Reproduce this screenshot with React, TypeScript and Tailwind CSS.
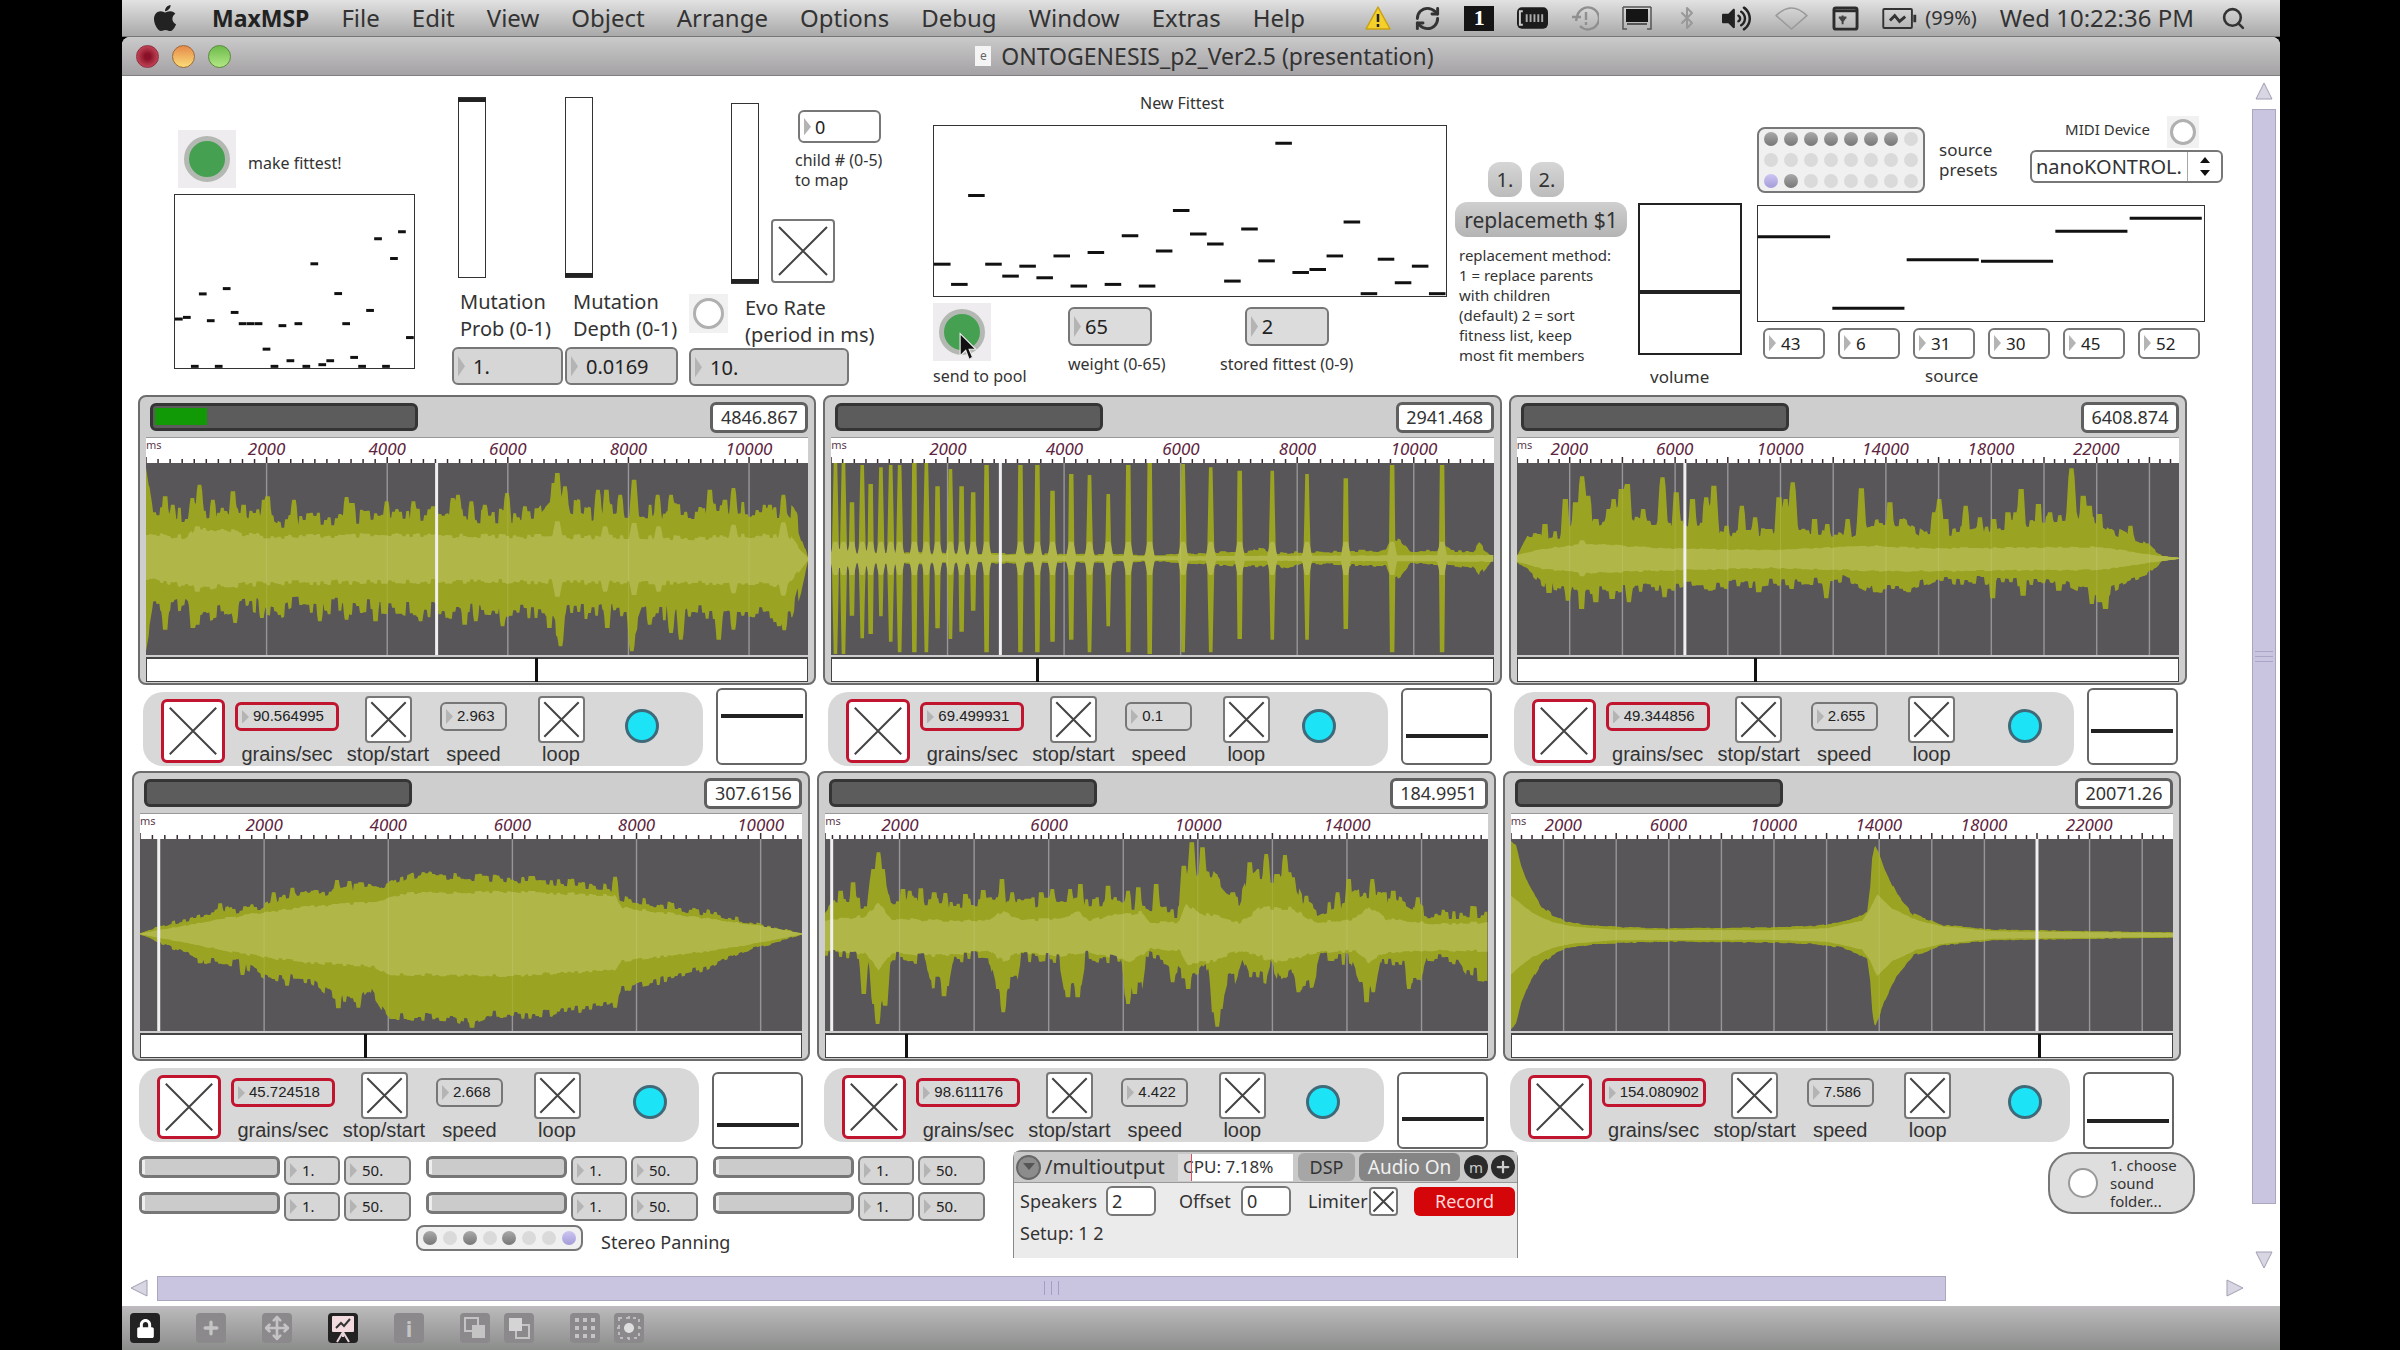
import React from 'react'
import { FaApple, FaLock, FaVolumeUp } from 'react-icons/fa'
import { Bluetooth, Move, Plus, RefreshCw, Search } from 'lucide-react'

type Pt = [number, number]

type Wave = {
    width: number
    mid: number
    jitter: number
    slope: number
    top: Pt[]
    bottom: Pt[]
    innerTop: Pt[]
    innerBottom: Pt[]
    topSpikes: Pt[]
    bottomSpikes: Pt[]
    innerSpikes: Pt[]
}

type PlayerData = {
    id: string
    time: string
    level: number
    step: number
    every: number
    ticks: number
    labels: string[]
    head: number
    range: number
    grains: string
    speed: string
    gain: number
    led: string
    wave: Wave
}

const lerp = (pts: Pt[], x: number) => {
    if (x <= pts[0][0]) return pts[0][1]
    for (let i = 1; i < pts.length; i++) {
        const [x1, y1] = pts[i]
        const [x0, y0] = pts[i - 1]
        if (x <= x1) return y0 + ((y1 - y0) * (x - x0)) / (x1 - x0 || 1)
    }
    return pts[pts.length - 1][1]
}

const noise = (n: number) => {
    const v = Math.sin(n * 12.9898) * 43758.5453
    return (v - Math.floor(v)) * 2 - 1
}

// builds a closed outline from the two envelopes, adding grit and peaks
const outline = (w: Wave, top: Pt[], bottom: Pt[], up: Pt[], down: Pt[], jitter: number, slope: number) => {
    const upper: string[] = []
    const lower: string[] = []
    for (let x = 0; x <= w.width; x += 2) {
        const t0 = lerp(top, x)
        const b0 = lerp(bottom, x)
        const room = Math.min(1, (b0 - t0) / 150)
        const cell = Math.floor(x / 8)
        let t = t0 + noise(cell + 3) * jitter * room
        let b = b0 + noise(cell + 71) * jitter * room
        up.forEach(([sx, sy]) => {
            t = Math.min(t, sy + Math.max(0, Math.abs(x - sx) - 5) * slope)
        })
        down.forEach(([sx, sy]) => {
            b = Math.max(b, sy - Math.max(0, Math.abs(x - sx) - 5) * slope)
        })
        upper.push(`${x},${Math.round(t)}`)
        lower.unshift(`${x},${Math.round(b)}`)
    }
    return [...upper, ...lower].join(' ')
}

const shift = (pts: Pt[], dx: number, dy: number): Pt[] => pts.map(([x, y]) => [x - dx, y - dy])

const clicks: [number, number, number][] = [
    [60, 222, 795], [78, 222, 795], [97, 340, 680], [120, 228, 748], [139, 285, 735], [162, 235, 682],
    [184, 228, 758], [204, 228, 790], [237, 222, 790], [264, 222, 790], [289, 292, 718], [318, 240, 750],
    [343, 292, 728], [369, 310, 665], [399, 228, 790], [475, 228, 790], [513, 228, 790], [547, 305, 758],
    [589, 255, 752], [630, 258, 790], [672, 315, 712], [717, 228, 790], [765, 222, 795], [840, 225, 790],
    [902, 235, 790], [967, 245, 750], [1040, 245, 752], [1118, 255, 752], [1205, 268, 720],
    [1309, 228, 790], [1421, 228, 790],
]

const bellTop: Pt[] = [
    [0, 5], [10, 20], [20, 80], [35, 140], [60, 200], [80, 225], [110, 248], [150, 258], [180, 262], [300, 268],
    [500, 266], [600, 261], [650, 250], [680, 235], [700, 215], [706, 150], [710, 60], [715, 18], [722, 35],
    [735, 90], [760, 170], [790, 225], [850, 258], [950, 272], [1302, 280],
]
const bellInner: Pt[] = [
    [0, 170], [40, 220], [80, 248], [120, 262], [200, 272], [500, 274], [620, 268], [690, 245], [706, 210],
    [720, 165], [750, 210], [800, 245], [850, 262], [950, 277], [1302, 282],
]
const mirror = (pts: Pt[], sum: number): Pt[] => pts.map(([x, y]) => [x, sum - y])

const waves: Wave[] = [
    {
        width: 1486, mid: 288, jitter: 26, slope: 18,
        top: [[0, 10], [16, 150], [280, 155], [300, 172], [700, 158], [880, 160], [905, 120], [940, 120], [1000, 150], [1440, 140], [1460, 170], [1486, 285]],
        bottom: [[0, 565], [16, 440], [90, 430], [110, 460], [240, 425], [300, 445], [330, 425], [700, 445], [900, 440], [920, 500], [945, 445], [1080, 440], [1095, 500], [1110, 445], [1450, 455], [1486, 290]],
        innerTop: [[0, 215], [90, 220], [110, 195], [280, 220], [700, 218], [1240, 225], [1440, 215], [1486, 286]],
        innerBottom: [[0, 350], [110, 375], [280, 360], [700, 355], [1240, 360], [1440, 365], [1486, 290]],
        topSpikes: [[43, 100], [60, 125], [104, 105], [120, 65], [150, 110], [195, 85], [219, 125], [265, 110], [273, 100], [332, 110], [450, 102], [463, 120], [540, 115], [600, 115], [645, 130], [688, 105], [700, 95], [730, 115], [760, 125], [810, 90], [850, 130], [915, 60], [923, 30], [940, 70], [1014, 80], [1033, 80], [1064, 95], [1095, 50], [1148, 95], [1178, 95], [1265, 80], [1299, 110], [1318, 75], [1400, 125], [1430, 95]],
        bottomSpikes: [[43, 500], [105, 495], [115, 485], [200, 480], [260, 465], [390, 475], [450, 470], [515, 475], [616, 475], [715, 485], [740, 475], [800, 490], [905, 495], [930, 550], [1035, 495], [1090, 565], [1130, 485], [1178, 510], [1200, 530], [1285, 530], [1318, 500], [1420, 490], [1432, 502]],
        innerSpikes: [[115, 190], [923, 175], [1030, 190], [1095, 180], [1150, 190], [1318, 185], [1430, 178]],
    },
    {
        width: 1486, mid: 286, jitter: 14, slope: 130,
        top: [[0, 268], [740, 276], [940, 265], [950, 255], [1000, 270], [1245, 262], [1258, 225], [1280, 240], [1300, 266], [1360, 262], [1370, 235], [1390, 262], [1440, 265], [1455, 245], [1486, 284]],
        bottom: [[0, 304], [740, 296], [960, 312], [1000, 305], [1020, 318], [1060, 300], [1245, 310], [1258, 350], [1280, 335], [1300, 300], [1440, 312], [1455, 335], [1486, 288]],
        innerTop: [[0, 272], [740, 280], [1486, 276]],
        innerBottom: [[0, 300], [740, 292], [1486, 296]],
        topSpikes: clicks.map(([x, t]): Pt => [x - 50, t - 222]),
        bottomSpikes: clicks.map(([x, , b]): Pt => [x - 50, b - 222]),
        innerSpikes: clicks.map(([x]): Pt => [x - 50, 236]),
    },
    {
        width: 1302, mid: 286, jitter: 14, slope: 26,
        top: [[0, 278], [20, 220], [90, 212], [100, 180], [130, 160], [150, 195], [220, 165], [350, 185], [420, 210], [600, 210], [660, 225], [690, 180], [760, 178], [800, 215], [1000, 180], [1100, 160], [1150, 180], [1180, 210], [1230, 232], [1270, 280], [1302, 284]],
        bottom: [[0, 298], [50, 365], [100, 385], [220, 375], [600, 355], [640, 348], [700, 378], [770, 378], [820, 350], [1080, 360], [1150, 395], [1200, 355], [1240, 335], [1270, 292], [1302, 288]],
        innerTop: [[0, 276], [50, 258], [130, 242], [300, 256], [500, 262], [700, 248], [800, 256], [1150, 252], [1250, 276], [1302, 284]],
        innerBottom: [[0, 296], [50, 318], [130, 330], [300, 322], [500, 315], [740, 325], [1150, 320], [1250, 298], [1302, 288]],
        topSpikes: shift([[105, 405], [145, 330], [165, 340], [178, 262], [190, 320], [205, 390], [230, 360], [240, 330], [255, 300], [267, 285], [298, 360], [336, 265], [363, 310], [395, 330], [422, 325], [437, 290], [462, 410], [492, 350], [518, 385], [565, 325], [578, 330], [592, 280], [635, 390], [660, 405], [700, 390], [727, 298], [783, 340], [870, 370], [880, 330], [893, 390], [932, 350], [960, 385], [987, 390], [1015, 370], [1030, 370], [1041, 300], [1075, 345], [1098, 370], [1140, 238], [1163, 320], [1175, 350], [1195, 375], [1256, 410]], 50, 222),
        bottomSpikes: shift([[113, 612], [150, 635], [177, 660], [205, 640], [237, 630], [270, 640], [340, 625], [430, 605], [525, 610], [590, 600], [658, 628], [755, 610], [820, 610], [985, 628], [1045, 620], [1115, 605], [1180, 645], [1195, 640], [1207, 660]], 50, 222),
        innerSpikes: [[128, 232]],
    },
    {
        width: 1486, mid: 284, jitter: 13, slope: 16,
        top: [[0, 283], [60, 255], [150, 225], [270, 200], [300, 178], [450, 155], [510, 140], [540, 150], [600, 115], [650, 108], [800, 118], [950, 128], [1020, 142], [1060, 150], [1078, 178], [1130, 188], [1250, 215], [1350, 245], [1440, 270], [1486, 283]],
        bottom: shift([[45, 518], [100, 550], [180, 595], [270, 605], [330, 645], [430, 655], [480, 705], [540, 715], [560, 680], [600, 765], [740, 768], [790, 785], [830, 760], [950, 758], [1110, 725], [1125, 680], [1200, 660], [1300, 625], [1400, 570], [1531, 518]], 45, 232),
        innerTop: [[0, 283], [270, 220], [400, 200], [530, 190], [600, 163], [850, 158], [1065, 170], [1082, 205], [1200, 225], [1400, 262], [1486, 283]],
        innerBottom: shift([[45, 518], [270, 575], [400, 600], [570, 615], [600, 638], [870, 643], [1110, 625], [1125, 598], [1300, 572], [1400, 552], [1531, 518]], 45, 232),
        topSpikes: shift([[225, 425], [345, 392], [387, 378], [440, 385], [487, 355], [515, 358], [540, 362], [685, 335], [815, 342], [1111, 345]], 45, 232),
        bottomSpikes: shift([[180, 605], [275, 640], [375, 672], [490, 740], [535, 738], [790, 798], [1111, 738]], 45, 232),
        innerSpikes: [],
    },
    {
        width: 1486, mid: 288, jitter: 20, slope: 20,
        top: shift([[30, 460], [50, 425], [125, 430], [130, 370], [150, 310], [168, 370], [178, 430], [420, 430], [610, 435], [690, 430], [750, 440], [790, 460], [828, 460], [834, 345], [900, 350], [930, 405], [960, 420], [975, 370], [1000, 350], [1080, 360], [1100, 420], [1135, 460], [1200, 425], [1240, 400], [1280, 410], [1330, 430], [1380, 465], [1516, 460]], 30, 240),
        bottom: shift([[30, 590], [105, 590], [130, 620], [140, 730], [165, 730], [176, 590], [255, 600], [265, 672], [310, 665], [320, 590], [400, 600], [412, 670], [460, 670], [470, 590], [555, 600], [566, 680], [605, 670], [615, 590], [695, 600], [702, 690], [742, 675], [750, 590], [800, 610], [830, 650], [870, 640], [890, 610], [900, 710], [925, 700], [932, 665], [950, 660], [965, 600], [980, 650], [1020, 655], [1030, 610], [1050, 665], [1080, 640], [1090, 680], [1125, 670], [1140, 590], [1210, 600], [1230, 670], [1270, 665], [1280, 600], [1330, 610], [1340, 670], [1365, 665], [1380, 600], [1450, 600], [1470, 640], [1516, 652]], 30, 240),
        innerTop: shift([[30, 485], [120, 470], [150, 430], [180, 482], [400, 485], [430, 455], [470, 485], [560, 480], [600, 460], [620, 485], [700, 465], [740, 460], [760, 490], [825, 490], [840, 435], [870, 460], [900, 470], [960, 490], [1010, 445], [1080, 450], [1130, 490], [1220, 480], [1250, 440], [1290, 480], [1400, 495], [1516, 490]], 30, 240),
        innerBottom: shift([[30, 575], [120, 585], [150, 635], [180, 580], [280, 590], [400, 575], [430, 605], [470, 580], [560, 590], [620, 578], [720, 605], [760, 570], [825, 575], [845, 615], [900, 605], [960, 575], [1050, 610], [1130, 580], [1220, 575], [1250, 610], [1290, 580], [1400, 575], [1516, 575]], 30, 240),
        topSpikes: shift([[65, 395], [93, 370], [138, 330], [150, 280], [160, 330], [205, 390], [220, 395], [245, 388], [275, 400], [300, 402], [345, 405], [385, 393], [427, 360], [450, 400], [515, 400], [540, 390], [580, 390], [603, 375], [635, 420], [665, 380], [710, 395], [733, 385], [773, 375], [835, 320], [853, 250], [877, 265], [905, 345], [945, 400], [983, 310], [1020, 285], [1045, 345], [1062, 288], [1080, 355], [1110, 410], [1180, 400], [1205, 360], [1258, 360], [1285, 400], [1305, 395], [1360, 415], [1485, 442]], 30, 240),
        bottomSpikes: shift([[117, 705], [140, 735], [148, 795], [165, 740], [297, 712], [430, 760], [575, 715], [597, 715], [710, 735], [725, 705], [810, 670], [845, 690], [903, 760], [910, 803], [918, 750], [1092, 700], [1245, 730], [1260, 700], [1340, 690]], 30, 240),
        innerSpikes: [],
    },
    {
        width: 1302, mid: 287, jitter: 5, slope: 30,
        top: bellTop, bottom: mirror(bellTop, 576),
        innerTop: bellInner, innerBottom: mirror(bellInner, 576),
        topSpikes: [], bottomSpikes: [], innerSpikes: [],
    },
]

const evens = ['2000', '4000', '6000', '8000', '10000']
const fours = ['2000', '6000', '10000', '14000', '18000', '22000']

const players: PlayerData[] = [
    { id: 'p1', time: '4846.867', level: 20, step: 270.6, every: 1, ticks: 10, labels: evens, head: 652, range: 59, grains: '90.564995', speed: '2.963', gain: 66, led: 'ml-10', wave: waves[0] },
    { id: 'p2', time: '2941.468', level: 0, step: 261.5, every: 1, ticks: 10, labels: evens, head: 380, range: 31, grains: '69.499931', speed: '0.1', gain: 35, led: 'ml-8', wave: waves[1] },
    { id: 'p3', time: '6408.874', level: 0, step: 103.6, every: 2, ticks: 5, labels: fours, head: 330, range: 36, grains: '49.344856', speed: '2.655', gain: 43, led: 'ml-13', wave: waves[2] },
    { id: 'p4', time: '307.6156', level: 0, step: 278.5, every: 1, ticks: 10, labels: evens, head: 42, range: 34, grains: '45.724518', speed: '2.668', gain: 27, led: 'ml-13', wave: waves[3] },
    { id: 'p5', time: '184.9951', level: 0, step: 167.3, every: 2, ticks: 10, labels: fours.slice(0, 4), head: 15, range: 12, grains: '98.611176', speed: '4.422', gain: 37, led: 'ml-10', wave: waves[4] },
    { id: 'p6', time: '20071.26', level: 0, step: 103.4, every: 2, ticks: 5, labels: fours, head: 1034, range: 80, grains: '154.080902', speed: '7.586', gain: 33, led: 'ml-14', wave: waves[5] },
]

const pool = [957, 952, 1100, 881, 962, 1100, 865, 937, 971, 971, 971, 1048, 1100, 977, 1083, 971, 1100, 790, 1095, 1083, 880, 971, 1073, 1100, 931, 714, 1100, 774, 693, 1013].map((y) => (y - 582) / 523)
const fittest = [614, 675, 407, 614, 650, 620, 655, 589, 680, 579, 675, 528, 680, 574, 452, 523, 553, 665, 508, 604, 249, 639, 630, 589, 487, 703, 599, 670, 620, 703].map((y) => (y - 197) / 513)
const sources = [709, 926, 779, 784, 693, 653].map((y) => (y - 616) / 349)

const MultiSlider = ({ values, className, label }: { values: number[]; className: string; label: string }) => (
    <svg role="img" aria-label={label} viewBox={`0 0 ${values.length} 1`} preserveAspectRatio="none" className={`block border border-[#333] bg-white ${className}`}>
        {values.map((v, i) => (
            <line key={i} x1={i} x2={i + 0.97} y1={v} y2={v} stroke="#111" strokeWidth={3} vectorEffect="non-scaling-stroke" />
        ))}
    </svg>
)

const NumBox = ({ id, value, label, className, inputClass = '' }: { id: string; value: string; label?: string; className: string; inputClass?: string }) => (
    <div className={`flex items-center border-2 border-[#777] text-[#222] ${className}`}>
        <svg viewBox="0 0 8 16" preserveAspectRatio="none" className="h-3/5 w-[7px] shrink-0 ml-1">
            <path d="M0 0 L8 8 L0 16 Z" fill="#b4b4b4" />
        </svg>
        <input id={id} aria-label={label} defaultValue={value} className={`w-full min-w-0 bg-transparent outline-none ${inputClass}`} />
    </div>
)

const Toggle = ({ id, label, className }: { id: string; label?: string; className: string }) => (
    <span className={`relative block shrink-0 border-2 bg-white ${className}`}>
        <input id={id} aria-label={label} type="checkbox" defaultChecked className="block size-full appearance-none" />
        <svg viewBox="0 0 40 40" className="absolute inset-0 size-full pointer-events-none" stroke="#444">
            <path d="M4 4 L36 36 M36 4 L4 36" strokeWidth={2} vectorEffect="non-scaling-stroke" />
        </svg>
    </span>
)

const VSlider = ({ label, value, className }: { label: string; value: number; className: string }) => (
    <input
        type="range"
        aria-label={label}
        defaultValue={value}
        className={`block appearance-none bg-white [writing-mode:vertical-lr] [direction:rtl] [&::-webkit-slider-thumb]:appearance-none [&::-webkit-slider-thumb]:h-[4px] [&::-webkit-slider-thumb]:bg-[#222] ${className}`}
    />
)

const GreenButton = ({ id, children }: { id: string; children?: React.ReactNode }) => (
    <button id={id} aria-label={id} className="relative grid size-[58px] shrink-0 place-items-center bg-[#eeecee]">
        <span className="size-[46px] rounded-full border-[5px] border-[#b3b8b3] bg-[#46a052]" />
        {children}
    </button>
)

const Bang = ({ label, className }: { label: string; className: string }) => (
    <button aria-label={label} className={`grid shrink-0 place-items-center bg-[#f1f1f1] ${className}`}>
        <span className="size-4/5 rounded-full border-[3px] border-[#b0b0b0] bg-white" />
    </button>
)

const dotTone: Record<string, string> = {
    o: 'bg-linear-to-b from-[#aaa] to-[#777]',
    '.': 'bg-[#dadada]',
    x: 'bg-linear-to-b from-[#cdc6f2] to-[#a39cd8]',
}

const Presets = ({ dots, label, className }: { dots: string; label: string; className: string }) => (
    <div className={`grid shrink-0 grid-cols-8 place-items-center rounded-lg border-2 border-[#777] bg-[#f0f0f0] px-[2px] ${className}`}>
        {dots.split('').map((d, i) => (
            <button key={i} aria-label={`${label} ${i + 1}`} className={`size-[14px] rounded-full ${dotTone[d]}`} />
        ))}
    </div>
)

const Waveform = ({ p }: { p: PlayerData }) => {
    const { wave } = p
    const lines: number[] = []
    for (let x = p.step; x < wave.width; x += p.step) lines.push(x)
    return (
        <svg role="img" aria-label="waveform" viewBox={`0 0 ${wave.width} 576`} preserveAspectRatio="none" className="block h-[192px] w-full bg-[#585658]">
            {lines.map((x) => (
                <line key={x} x1={x} x2={x} y1={0} y2={576} stroke="#8b898b" strokeWidth={1.5} vectorEffect="non-scaling-stroke" />
            ))}
            <polygon points={outline(wave, wave.top, wave.bottom, wave.topSpikes, wave.bottomSpikes, wave.jitter, wave.slope)} fill="#9ba422" />
            <polygon
                points={outline(wave, wave.innerTop, wave.innerBottom, wave.innerSpikes, wave.innerSpikes.map(([x, y]): Pt => [x, wave.mid * 2 - y]), wave.jitter / 3, 7)}
                fill="#b0b748"
            />
            {lines.map((x) => (
                <line key={x} x1={x} x2={x} y1={0} y2={576} stroke="#ffffff" strokeOpacity={0.12} vectorEffect="non-scaling-stroke" />
            ))}
            <line x1={p.head} x2={p.head} y1={0} y2={576} stroke="#f0f0f0" strokeWidth={3} vectorEffect="non-scaling-stroke" />
        </svg>
    )
}

const Ruler = ({ p }: { p: PlayerData }) => {
    const pct = (n: number) => `${(n / p.wave.width) * 100}%`
    const ticks: number[] = []
    for (let i = 0; (i * p.step) / p.ticks < p.wave.width; i++) ticks.push(i)
    return (
        <div className="relative h-[26px] overflow-hidden border-t border-[#999] bg-white">
            <span className="absolute left-0 top-0 text-[11px] leading-[14px] text-[#5b3a4c]">ms</span>
            <div className="flex text-center text-[17px] leading-[22px] italic text-[#5e2540]">
                <span className="shrink-0" style={{ width: pct(p.step * (1 - p.every / 2)) }} />
                {p.labels.map((l) => (
                    <span key={l} className="shrink-0" style={{ width: pct(p.step * p.every) }}>{l}</span>
                ))}
            </div>
            <svg viewBox={`0 0 ${p.wave.width} 6`} preserveAspectRatio="none" className="absolute bottom-0 left-0 h-[6px] w-full">
                {ticks.map((i) => (
                    <line key={i} x1={(i * p.step) / p.ticks} x2={(i * p.step) / p.ticks} y1={i % p.ticks ? 2 : 0} y2={6} stroke="#3a2a34" strokeWidth={1.5} vectorEffect="non-scaling-stroke" />
                ))}
            </svg>
        </div>
    )
}

const Control = ({ id, text, className, children }: { id: string; text: string; className: string; children: React.ReactNode }) => (
    <div className={`flex shrink-0 flex-col items-center ${className}`}>
        <div className="flex h-[47px]">{children}</div>
        <label htmlFor={id} className="text-[20px] leading-[22px] whitespace-nowrap text-[#333]">{text}</label>
    </div>
)

const Player = ({ p, strip, gain }: { p: PlayerData; strip: string; gain: string }) => (
    <section className="min-w-0 flex-1">
        <div className="rounded-lg border-2 border-[#6c6c6c] bg-[#cecece] px-[6px] pb-px">
            <div className="flex h-[40px] items-center justify-between pl-1">
                <div className="h-[28px] w-[268px] rounded-md border-[3px] border-[#353535] bg-[#5c5c5c] p-[2px]">
                    {p.level > 0 && <div className="h-[17px] bg-[#119a06]" style={{ width: `${p.level}%` }} />}
                </div>
                <input aria-label="position" defaultValue={p.time} className="h-[31px] w-[98px] rounded-md border-[3px] border-[#606060] bg-white text-center text-[18px] text-[#333]" />
            </div>
            <Ruler p={p} />
            <Waveform p={p} />
            <input
                type="range"
                aria-label="loop point"
                defaultValue={p.range}
                className="mt-[2px] block h-[25px] w-full appearance-none border border-t-2 border-[#444] bg-white [&::-webkit-slider-thumb]:appearance-none [&::-webkit-slider-thumb]:h-[24px] [&::-webkit-slider-thumb]:w-[3px] [&::-webkit-slider-thumb]:bg-[#111]"
            />
        </div>
        <div className={`flex items-start gap-[13px] ${strip}`}>
            <div className="mt-[7px] flex h-[74px] w-[560px] shrink-0 rounded-[20px] bg-[#d8d8d8] pl-[18px] pt-1 font-['Liberation_Sans',sans-serif]">
                <Toggle id={`${p.id}-on`} label="player on" className="mt-[3px] size-[64px] rounded-md border-[3px] border-[#c0142f]" />
                <Control id={`${p.id}-grains`} text="grains/sec" className="ml-[10px] w-[104px]">
                    <NumBox id={`${p.id}-grains`} value={p.grains} className="mt-[6px] h-[29px] w-[104px] rounded-md border-[3px] border-[#c0142f]" inputClass="pl-[4px] text-[15px]" />
                </Control>
                <Control id={`${p.id}-run`} text="stop/start" className="ml-1 w-[90px]">
                    <Toggle id={`${p.id}-run`} className="size-[47px] rounded border-[#777]" />
                </Control>
                <Control id={`${p.id}-speed`} text="speed" className="ml-[7px] w-[67px]">
                    <NumBox id={`${p.id}-speed`} value={p.speed} className="mt-[6px] h-[29px] w-[67px] rounded-md" inputClass="pl-[4px] text-[15px]" />
                </Control>
                <Control id={`${p.id}-loop`} text="loop" className="ml-[30px] w-[48px]">
                    <Toggle id={`${p.id}-loop`} className="size-[47px] rounded border-[#777]" />
                </Control>
                <button aria-label="trigger" className={`mt-[13px] size-[34px] rounded-full border-[3px] border-[#3f6a7a] bg-[#1ce4f6] ${p.led}`} />
            </div>
            <VSlider label="gain" value={p.gain} className={`h-[77px] w-[91px] rounded-md border-2 border-[#666] px-[3px] [&::-webkit-slider-thumb]:w-[82px] ${gain}`} />
        </div>
    </section>
)

const PanRow = ({ id }: { id: string }) => (
    <div className="flex items-start gap-1">
        <input
            type="range"
            aria-label="pan"
            defaultValue={0}
            className="h-[22px] w-[141px] appearance-none rounded-md border-[3px] border-[#777] bg-[#cbcbcb] [&::-webkit-slider-thumb]:appearance-none [&::-webkit-slider-thumb]:h-[14px] [&::-webkit-slider-thumb]:w-[3px] [&::-webkit-slider-thumb]:bg-[#eee]"
        />
        <NumBox id={`${id}-w`} label="pan width" value="1." className="h-[29px] w-[56px] rounded-md bg-[#d6d6d6]" inputClass="pl-[5px] text-[15px]" />
        <NumBox id={`${id}-p`} label="pan position" value="50." className="h-[29px] w-[67px] rounded-md bg-[#d6d6d6]" inputClass="pl-[5px] text-[15px]" />
    </div>
)

const MenuBar = () => (
    <header className="flex h-[37px] items-center justify-between border-b border-[#777] bg-linear-to-b from-[#e2e2e2] to-[#a9a9a9] pl-[28px] pr-[34px] text-[24px] whitespace-nowrap text-[#333]">
        <nav className="flex items-center gap-8">
            <FaApple className="size-[30px] text-[#222]" />
            {['MaxMSP', 'File', 'Edit', 'View', 'Object', 'Arrange', 'Options', 'Debug', 'Window', 'Extras', 'Help'].map((m, i) => (
                <a key={m} href="#" className={i === 0 ? 'text-[23px] font-bold text-[#222]' : ''}>{m}</a>
            ))}
        </nav>
        <div className="flex items-center gap-[23px]">
            <svg viewBox="0 0 26 26" className="size-[26px]">
                <path d="M13 2 L25 24 H1 Z" fill="#f5cf2a" stroke="#c9a113" strokeWidth={1.5} strokeLinejoin="round" />
                <path d="M13 9 V17 M13 19 V22" stroke="#222" strokeWidth={2.5} />
            </svg>
            <RefreshCw className="size-[27px] text-[#333]" strokeWidth={2.6} />
            <span className="grid h-[25px] w-[30px] place-items-center bg-[#151515] font-['Liberation_Serif',serif] text-[22px] leading-none font-bold text-white">1</span>
            <svg viewBox="0 0 32 22" className="h-[22px] w-[31px]">
                <rect width={32} height={22} rx={5} fill="#1c1c1c" />
                <path d="M6 4 H3 V18 H6" stroke="#ccc" strokeWidth={2} fill="none" />
                <path d="M10 7 V15 M14 7 V15 M18 7 V15 M22 7 V15 M26 7 V15" stroke="#aaa" strokeWidth={2} />
            </svg>
            <svg viewBox="0 0 28 26" className="h-[26px] w-[28px]" fill="none" stroke="#8f8f8f" strokeWidth={2.4}>
                <path d="M6 13 A11 11 0 1 1 9 21 M1 12 H10 M5 16 L6 12 M15 7 V15 M15 17 V20" />
            </svg>
            <svg viewBox="0 0 30 24" className="h-[24px] w-[30px]">
                <path d="M1 1 H29 M1 1 V23 H5 M29 1 V23 H25" stroke="#555" strokeWidth={1.5} fill="none" />
                <rect x={4} y={3} width={22} height={13} fill="#151515" />
                <path d="M5 18 H25" stroke="#555" strokeWidth={2} />
            </svg>
            <Bluetooth className="size-[24px] text-[#999]" />
            <FaVolumeUp className="size-[29px] text-[#222]" />
            <svg viewBox="0 0 36 26" className="h-[25px] w-[35px]">
                <path d="M2 10 Q18 -6 34 10 L18 24 Z" fill="none" stroke="#9a9a9a" strokeWidth={1.5} />
            </svg>
            <svg viewBox="0 0 28 26" className="h-[25px] w-[27px]">
                <rect x={2} y={2} width={24} height={22} rx={2} fill="none" stroke="#2c2c2c" strokeWidth={3} />
                <path d="M2 5 H26" stroke="#2c2c2c" strokeWidth={3} />
                <path d="M7 12 H15 M11 10 V19 M8 12 L11 16 L14 12" stroke="#444" strokeWidth={2} fill="none" />
            </svg>
            <div className="flex items-center gap-2 text-[20px]">
                <svg viewBox="0 0 36 22" className="h-[21px] w-[35px]" fill="none" stroke="#333" strokeWidth={2}>
                    <rect x={1} y={1} width={30} height={20} rx={1} />
                    <path d="M34 7 V15 M8 13 L13 8 L18 14 L24 9" strokeWidth={3} />
                </svg>
                <span>(99%)</span>
            </div>
            <span>Wed 10:22:36 PM</span>
            <button aria-label="Spotlight" className="ml-1"><Search className="size-[25px]" strokeWidth={2.5} /></button>
        </div>
    </header>
)

const TopControls = () => (
    <div className="flex min-h-[319px] items-start text-[16px] leading-[20px] text-[#333]">
        <div className="ml-[52px] w-[241px] shrink-0 pt-[54px]">
            <div className="flex items-center gap-3 pl-1">
                <GreenButton id="make-fittest" />
                <label htmlFor="make-fittest" className="pt-2">make fittest!</label>
            </div>
            <MultiSlider label="pool" values={pool} className="mt-[6px] h-[175px] w-full" />
        </div>

        <div className="ml-[37px] w-[111px] shrink-0 pt-[21px]">
            <VSlider label="mutation probability" value={100} className="ml-[6px] h-[181px] w-[28px] border border-[#333] [&::-webkit-slider-thumb]:w-[28px]" />
            <label htmlFor="mut-prob" className="mt-[10px] block pl-2 text-[20px] leading-[27px] whitespace-nowrap">Mutation<br />Prob (0-1)</label>
            <NumBox id="mut-prob" value="1." className="mt-[5px] h-[38px] w-full rounded-md bg-[#d6d6d6]" inputClass="pl-2 text-[20px]" />
        </div>

        <div className="ml-[2px] w-[113px] shrink-0 pt-[21px]">
            <VSlider label="mutation depth" value={0} className="h-[181px] w-[28px] border border-[#333] [&::-webkit-slider-thumb]:w-[28px]" />
            <label htmlFor="mut-depth" className="mt-[10px] block pl-2 text-[20px] leading-[27px] whitespace-nowrap">Mutation<br />Depth (0-1)</label>
            <NumBox id="mut-depth" value="0.0169" className="mt-[5px] h-[38px] w-full rounded-md bg-[#d6d6d6]" inputClass="pl-2 text-[20px]" />
        </div>

        <div className="ml-[11px] w-[194px] shrink-0">
            <div className="flex items-start">
                <VSlider label="evolution rate" value={0} className="ml-[42px] mt-[27px] h-[181px] w-[28px] border border-[#333] [&::-webkit-slider-thumb]:w-[28px]" />
                <div className="ml-3 mt-[34px]">
                    <NumBox id="child" value="0" className="ml-[27px] h-[33px] w-[83px] rounded-md bg-white" inputClass="pl-1 text-[18px]" />
                    <label htmlFor="child" className="ml-6 mt-[7px] block whitespace-nowrap">child # (0-5)<br />to map</label>
                    <Toggle id="evo-on" label="run evolution" className="mt-[29px] size-[64px] rounded border-[#777]" />
                </div>
            </div>
            <div className="mt-[10px] flex items-start gap-[17px]">
                <Bang label="step evolution" className="size-[39px]" />
                <label htmlFor="evo-rate" className="text-[20px] leading-[27px] whitespace-nowrap">Evo Rate<br />(period in ms)</label>
            </div>
            <NumBox id="evo-rate" value="10." className="h-[38px] w-[160px] rounded-md bg-[#d6d6d6]" inputClass="pl-2 text-[20px]" />
        </div>

        <div className="ml-[50px] w-[514px] shrink-0 pt-[17px]">
            <h2 className="pr-4 text-center">New Fittest</h2>
            <MultiSlider label="new fittest" values={fittest} className="mt-3 h-[172px] w-full" />
            <div className="mt-[6px] flex items-start whitespace-nowrap">
                <div className="w-[135px]">
                    <GreenButton id="send-to-pool">
                        <svg viewBox="0 0 16 26" className="absolute left-[26px] top-[29px] h-[30px] w-[18px]">
                            <path d="M1 1 V21 L6 16 L9 24 L12 22 L9 15 H15 Z" fill="#111" stroke="#eee" />
                        </svg>
                    </GreenButton>
                    <label htmlFor="send-to-pool" className="mt-[5px] block">send to pool</label>
                </div>
                <div className="w-[152px] pt-1">
                    <NumBox id="weight" value="65" className="h-[39px] w-[84px] rounded-md bg-[#dcdcdc]" inputClass="pl-1 text-[20px]" />
                    <label htmlFor="weight" className="mt-2 block">weight (0-65)</label>
                </div>
                <div className="flex flex-col items-center pt-1">
                    <NumBox id="stored" value="2" className="h-[39px] w-[84px] rounded-md bg-[#dcdcdc]" inputClass="pl-1 text-[20px]" />
                    <label htmlFor="stored" className="mt-2">stored fittest (0-9)</label>
                </div>
            </div>
        </div>

        <div className="ml-2 w-[172px] shrink-0 pt-[86px]">
            <div className="flex gap-2 pl-[33px] text-[20px]">
                <button className="h-[35px] w-[34px] rounded-xl bg-linear-to-b from-[#d6d6d6] to-[#bcbcbc]">1.</button>
                <button className="h-[35px] w-[34px] rounded-xl bg-linear-to-b from-[#d6d6d6] to-[#bcbcbc]">2.</button>
            </div>
            <button className="mt-[5px] h-[35px] w-full rounded-xl bg-linear-to-b from-[#cfcfcf] to-[#b4b4b4] text-[21px]">replacemeth $1</button>
            <p className="mt-2 pl-1 text-[15px] whitespace-nowrap">
                replacement method:<br />1 = replace parents<br />with children<br />(default) 2 = sort<br />fitness list, keep<br />most fit members
            </p>
        </div>

        <div className="ml-[11px] w-[104px] shrink-0 pt-[127px]">
            <VSlider label="volume" value={41} className="h-[152px] w-[104px] border-2 border-[#222] [&::-webkit-slider-thumb]:w-[100px]" />
            <div className="mt-3 pl-3 text-[17px]">volume</div>
        </div>

        <div className="ml-[15px] w-[467px] shrink-0 pt-[40px] text-[17px]">
            <div className="flex items-start">
                <Presets label="source preset" dots="ooooooo.........xo......" className="mt-[11px] h-[66px] w-[168px]" />
                <div className="ml-[14px] mt-[24px] w-[91px]">source<br />presets</div>
                <div>
                    <div className="flex justify-end gap-[17px] pr-[24px]">
                        <label htmlFor="midi" className="pt-[3px] text-[15px]">MIDI Device</label>
                        <Bang label="rescan devices" className="size-[32px]" />
                    </div>
                    <div className="relative mt-[2px]">
                        <select id="midi" className="h-[33px] w-[193px] appearance-none rounded-md border-2 border-[#777] bg-white pl-1 text-[20px]">
                            <option>nanoKONTROL.</option>
                        </select>
                        <svg viewBox="0 0 36 33" className="pointer-events-none absolute right-0 top-0 h-[33px] w-[36px]">
                            <path d="M0 2 V31" stroke="#888" strokeWidth={1.5} />
                            <path d="M13 13 L18 7 L23 13 Z M13 20 L18 26 L23 20 Z" fill="#111" />
                        </svg>
                    </div>
                </div>
            </div>
            <MultiSlider label="source levels" values={sources} className="mt-3 h-[117px] w-[448px]" />
            <div className="mt-[6px] flex gap-[13px] pl-[6px]">
                {['43', '6', '31', '30', '45', '52'].map((v, i) => (
                    <NumBox key={v} id={`source-${i}`} label={`source ${i + 1}`} value={v} className="h-[31px] w-[62px] rounded-md bg-white" inputClass="pl-[5px] text-[17px]" />
                ))}
            </div>
            <div className="mt-[7px] pl-[168px]">source</div>
        </div>
    </div>
)

const MultiOutput = () => (
    <section className="ml-7 h-[108px] w-[505px] shrink-0 rounded-t-lg border-x border-t-2 border-[#888] bg-[#ebebeb] text-[18px] text-[#333]">
        <div className="flex h-[31px] items-center border-b border-[#999] bg-[#c9c9c9] px-[2px]">
            <button aria-label="collapse" className="grid size-[25px] place-items-center rounded-full border-2 border-[#666] bg-[#8c8c8c]">
                <svg viewBox="0 0 12 8" className="w-[12px]"><path d="M0 0 H12 L6 7 Z" fill="#555" /></svg>
            </button>
            <h2 className="ml-1 w-[133px] text-[20px]">/multioutput</h2>
            <div className="relative h-[27px] w-[115px] bg-linear-to-r from-[#dcdcdc] from-12% to-white to-12% pl-[5px] text-[17px] leading-[26px] whitespace-nowrap">
                CPU: 7.18%
                <span className="absolute left-[13px] top-0 h-full w-px bg-[#d8505c]" />
            </div>
            <button className="ml-[5px] h-[28px] w-[57px] rounded-md bg-[#a6a6a6]">DSP</button>
            <button className="ml-1 h-[28px] w-[101px] rounded-md bg-[#858585] text-[19px] text-[#f0f0f0]">Audio On</button>
            <button className="ml-1 size-[24px] shrink-0 rounded-full bg-[#2b2b2b] text-[15px] leading-none text-[#ccc]">m</button>
            <button aria-label="add" className="ml-[3px] grid size-[24px] shrink-0 place-items-center rounded-full bg-[#2b2b2b] text-[#ccc]"><Plus className="size-[18px]" strokeWidth={3} /></button>
        </div>
        <div className="flex items-center pl-[6px] pt-[3px]">
            <label htmlFor="speakers" className="w-[86px]">Speakers</label>
            <input id="speakers" defaultValue="2" className="h-[30px] w-[50px] rounded-md border-2 border-[#777] bg-white pl-1" />
            <label htmlFor="offset" className="ml-[23px] w-[62px]">Offset</label>
            <input id="offset" defaultValue="0" className="h-[30px] w-[50px] rounded-md border-2 border-[#777] bg-white pl-1" />
            <label htmlFor="limiter" className="ml-[17px] w-[61px]">Limiter</label>
            <Toggle id="limiter" className="size-[29px] rounded border-[#777]" />
            <button className="ml-4 h-[29px] w-[101px] rounded-md bg-[#d4060a] text-[#ffd9d9]">Record</button>
        </div>
        <div className="pl-[6px] pt-1">Setup: 1 2</div>
    </section>
)

const BottomControls = () => (
    <div className="mt-px flex items-start pl-[17px] pr-[53px]">
        <div className="shrink-0 pt-[6px]">
            <div className="grid grid-cols-3 gap-x-[15px] gap-y-[7px]">
                {['a', 'b', 'c', 'd', 'e', 'f'].map((k) => <PanRow key={k} id={`pan-${k}`} />)}
            </div>
            <div className="mt-1 flex items-start pl-[277px]">
                <Presets label="pan preset" dots="o.o.o..x" className="h-[26px] w-[167px]" />
                <div className="ml-[18px] pt-1 text-[18px] leading-[26px] text-[#333]">Stereo Panning</div>
            </div>
        </div>
        <MultiOutput />
        <button className="mt-[2px] ml-auto flex h-[62px] w-[147px] shrink-0 items-center rounded-[24px] border-2 border-[#777] bg-[#dedede] pl-[18px] text-left text-[15px] leading-[18px] text-[#333]">
            <span className="size-[30px] rounded-full border-2 border-[#999] bg-white" />
            <span className="ml-[12px]">1. choose<br />sound<br />folder...</span>
        </button>
    </div>
)

const ToolIcon = ({ label, dark, className = '', children }: { label: string; dark?: boolean; className?: string; children: React.ReactNode }) => (
    <button aria-label={label} className={`grid size-[30px] place-items-center rounded ${dark ? 'bg-[#222] text-white' : 'bg-[#8b898b] text-[#c4c4c4]'} ${className}`}>
        {children}
    </button>
)

const Toolbar = () => (
    <footer className="flex h-[44px] items-center bg-linear-to-b from-[#bdbbbd] to-[#8b8d8b] pl-2">
        <ToolIcon label="lock" dark><FaLock className="size-[19px]" /></ToolIcon>
        <ToolIcon label="new object" className="ml-9"><Plus className="size-[20px]" strokeWidth={4} /></ToolIcon>
        <ToolIcon label="move" className="ml-9"><Move className="size-[26px]" strokeWidth={2.5} /></ToolIcon>
        <ToolIcon label="presentation" dark className="ml-9">
            <svg viewBox="0 0 30 30" className="size-[30px]">
                <rect x={4} y={3} width={22} height={16} rx={1} fill="#f3dbe0" />
                <path d="M8 15 L13 10 L16 13 L22 6" stroke="#333" strokeWidth={2} fill="none" />
                <path d="M15 19 L9 29 M15 19 L21 29 M15 19 V24" stroke="#e8d4d8" strokeWidth={2} />
            </svg>
        </ToolIcon>
        <ToolIcon label="inspector" className="ml-9 text-[22px] leading-none font-bold">i</ToolIcon>
        <ToolIcon label="bring to front" className="ml-9">
            <svg viewBox="0 0 30 30" className="size-[30px]">
                <rect x={5} y={5} width={13} height={13} fill="none" stroke="#c4c4c4" strokeWidth={2} />
                <rect x={12} y={12} width={13} height={13} fill="#c4c4c4" />
            </svg>
        </ToolIcon>
        <ToolIcon label="send to back" className="ml-[14px]">
            <svg viewBox="0 0 30 30" className="size-[30px]">
                <rect x={12} y={12} width={13} height={13} fill="none" stroke="#c4c4c4" strokeWidth={2} />
                <rect x={5} y={5} width={13} height={13} fill="#d4d4d4" />
            </svg>
        </ToolIcon>
        <ToolIcon label="grid" className="ml-9">
            <span className="grid grid-cols-3 gap-1">
                {Array.from({ length: 9 }, (_, i) => <span key={i} className="size-[4px] bg-[#c4c4c4]" />)}
            </span>
        </ToolIcon>
        <ToolIcon label="snap to grid" className="ml-[14px]">
            <svg viewBox="0 0 30 30" className="size-[30px]">
                <path d="M5 5 H25 V25 H5 Z M15 3 V27 M3 15 H27" fill="none" stroke="#bdbdbd" strokeWidth={2} strokeDasharray="3 4" />
                <circle cx={15} cy={15} r={5} fill="#dedede" />
            </svg>
        </ToolIcon>
    </footer>
)

const Arrow = ({ label, d }: { label: string; d: string }) => (
    <button aria-label={label} className="block shrink-0">
        <svg viewBox="0 0 20 20" className="size-[20px]"><path d={d} fill="#d8d6e2" stroke="#a19fb2" /></svg>
    </button>
)

const App = () => {
    return (
        <div className="flex min-h-screen flex-col bg-black pl-[122px] pr-[120px] font-['Noto_Sans',sans-serif]">
            <MenuBar />
            <div className="flex flex-1 flex-col overflow-hidden rounded-t-lg bg-white">
                <div className="flex h-[39px] items-center border-b border-[#808080] bg-linear-to-b from-[#cbcacb] to-[#a4a2a4] pl-[14px]">
                    <div className="flex gap-[13px]">
                        <button aria-label="close" className="size-[23px] rounded-full border border-[#8c3040] bg-radial from-[#8a1028] from-20% to-[#e25a70]" />
                        <button aria-label="minimize" className="size-[23px] rounded-full border border-[#9a6a3a] bg-linear-to-b from-[#e58a4a] to-[#f9dc78]" />
                        <button aria-label="zoom" className="size-[23px] rounded-full border border-[#5a8a3a] bg-linear-to-b from-[#6dbb4c] to-[#b2e884]" />
                    </div>
                    <h1 className="flex flex-1 items-center justify-center gap-[10px] pr-[102px] text-[23px] text-[#333]">
                        <span className="grid h-[20px] w-[16px] place-items-center bg-[#f4f4f4] text-[12px] leading-none text-[#666]">e</span>
                        ONTOGENESIS_p2_Ver2.5 (presentation)
                    </h1>
                </div>

                <div className="flex flex-1">
                    <main className="min-w-0 flex-1">
                        <TopControls />
                        <div className="flex gap-[7px] pl-[16px] pr-[61px]">
                            {players.slice(0, 3).map((p) => <Player key={p.id} p={p} strip="ml-[5px]" gain="mt-[3px]" />)}
                        </div>
                        <div className="mt-[5px] flex gap-[7px] pl-[10px] pr-[67px]">
                            {players.slice(3).map((p) => <Player key={p.id} p={p} strip="ml-[7px]" gain="mt-[11px]" />)}
                        </div>
                        <BottomControls />
                    </main>
                    <div className="flex w-[32px] flex-col items-center pt-[5px]">
                        <Arrow label="scroll up" d="M10 2 L18 18 H2 Z" />
                        <div className="mt-2 grid w-[24px] flex-1 place-content-center gap-[4px] border border-[#aaa8bd] bg-[#c9c5e1]">
                            <span className="h-px w-[18px] bg-[#aaa6c6]" />
                            <span className="h-px w-[18px] bg-[#aaa6c6]" />
                            <span className="h-px w-[18px] bg-[#aaa6c6]" />
                        </div>
                        <div className="h-[46px]" />
                        <Arrow label="scroll down" d="M10 18 L2 2 H18 Z" />
                    </div>
                </div>

                <div className="flex h-[36px] items-center pl-[7px] pr-[35px]">
                    <Arrow label="scroll left" d="M2 10 L18 2 V18 Z" />
                    <div className="ml-2 flex h-[25px] flex-[32] items-center justify-center gap-[6px] border border-[#aaa8bd] bg-[#c9c5e1]">
                        <span className="h-[14px] w-px bg-[#a39fc0]" />
                        <span className="h-[14px] w-px bg-[#a39fc0]" />
                        <span className="h-[14px] w-px bg-[#a39fc0]" />
                    </div>
                    <div className="flex-[5]" />
                    <Arrow label="scroll right" d="M18 10 L2 2 V18 Z" />
                </div>
            </div>
            <Toolbar />
        </div>
    )
}

export default App
